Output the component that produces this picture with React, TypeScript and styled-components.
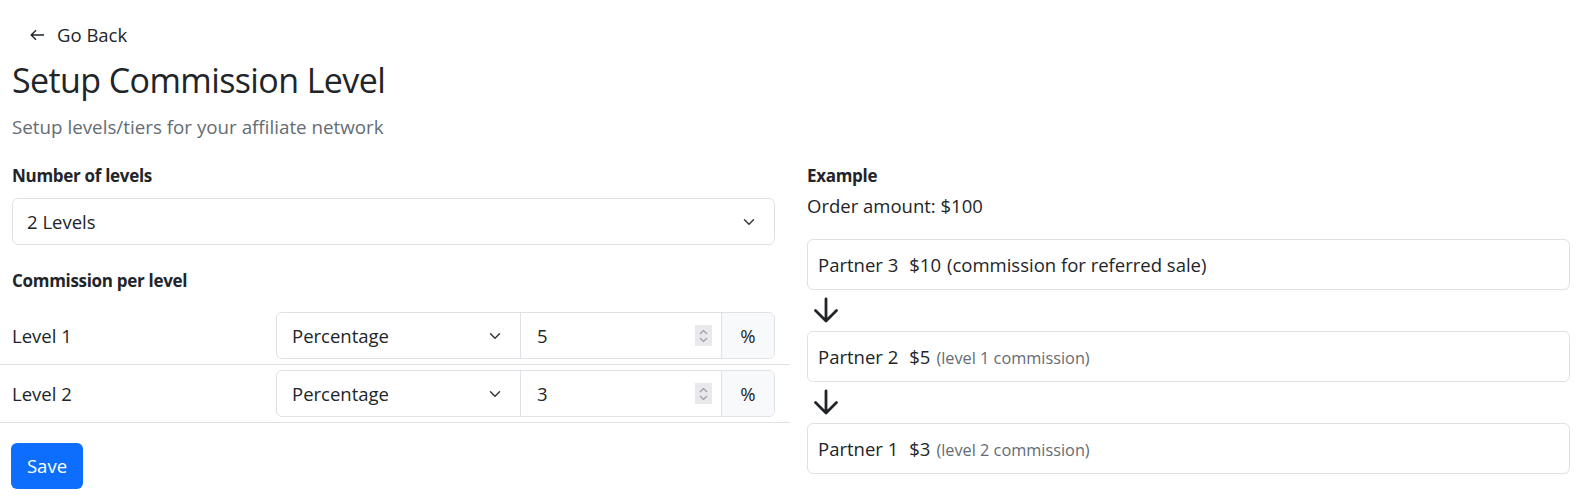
import React from "react";
import styled, { createGlobalStyle } from "styled-components";

const GlobalStyle = createGlobalStyle`
  html, body {
    margin: 0;
    padding: 0;
    background: #ffffff;
  }
  body {
    font-family: "Open Sans", "Noto Sans", "Liberation Sans", sans-serif;
    font-size: 18.5px;
    line-height: 24px;
    color: #212529;
  }
  * { box-sizing: border-box; }
`;

const Page = styled.div`
  padding-top: 16px;
`;

const Header = styled.div`
  padding: 0 15px 0 12px;
`;

const BackButton = styled.button`
  display: inline-flex;
  align-items: center;
  gap: 12px;
  height: 38px;
  padding: 0 12px 0 18px;
  border: none;
  background: transparent;
  font: inherit;
  color: #212529;
  cursor: pointer;
`;

const Title = styled.h2`
  margin: 7px 0 0;
  font-size: 34px;
  line-height: 38px;
  letter-spacing: -0.6px;
  font-weight: 400;
`;

const Subtitle = styled.p`
  margin: 16px 0 0;
  font-size: 18.8px;
  color: #646c74;
`;

const Columns = styled.div`
  display: grid;
  grid-template-columns: 790px 1fr;
  margin-top: 25px;
`;

const LeftCol = styled.div`
  display: flex;
  flex-direction: column;
`;

const LeftInner = styled.div`
  padding: 0 15px 0 12px;
`;

const RightCol = styled.div`
  padding: 0 10px 0 17px;
`;

const Label = styled.div<{ $top?: number }>`
  font-size: 17px;
  font-weight: 700;
  letter-spacing: -0.3px;
  margin-top: ${(p) => p.$top ?? 0}px;
`;

const SelectBox = styled.div`
  display: flex;
  align-items: center;
  justify-content: space-between;
  height: 47px;
  margin-top: 10px;
  padding: 0 17px 0 14px;
  border: 1px solid #dee2e6;
  border-radius: 6px;
  background: #fff;
`;

const Table = styled.div`
  margin-top: 14px;
`;

const Row = styled.div`
  display: grid;
  grid-template-columns: 264px 1fr;
  align-items: center;
  padding: 5px 15px 5px 12px;
  border-bottom: 1px solid #dee2e6;
`;

const InputGroup = styled.div`
  display: grid;
  grid-template-columns: 244px 1fr 53px;
  height: 47px;
  border: 1px solid #dee2e6;
  border-radius: 6px;
  overflow: hidden;
`;

const GroupSelect = styled.div`
  display: flex;
  align-items: center;
  justify-content: space-between;
  padding: 0 17px 0 15px;
  border-right: 1px solid #dee2e6;
`;

const NumberField = styled.div`
  display: flex;
  align-items: center;
  justify-content: space-between;
  padding: 0 9px 0 16px;
`;

const Spinner = styled.span`
  display: flex;
  flex-direction: column;
  align-items: center;
  justify-content: center;
  width: 17px;
  height: 21px;
  background: #e9e9ed;
  gap: 2px;
`;

const Addon = styled.div`
  display: flex;
  align-items: center;
  justify-content: center;
  background: #f8f9fa;
  border-left: 1px solid #dee2e6;
`;

const SaveButton = styled.button`
  align-self: flex-start;
  margin: 20px 0 0 11px;
  width: 72px;
  height: 46px;
  border: none;
  border-radius: 6px;
  background: #0d6efd;
  color: #fff;
  font: inherit;
  cursor: pointer;
`;

const OrderLine = styled.div`
  margin-top: 6px;
`;

const Flow = styled.div`
  display: flex;
  flex-direction: column;
  margin-top: 21px;
`;

const Card = styled.div`
  display: flex;
  align-items: baseline;
  height: 51px;
  padding: 13px 10px;
  border: 1px solid #dee2e6;
  border-radius: 6px;
  white-space: pre;
`;

const Amount = styled.span`
  margin-left: 11px;
`;

const Note = styled.span<{ $muted?: boolean }>`
  margin-left: 6px;
  font-size: ${(p) => (p.$muted ? "16.3px" : "inherit")};
  color: ${(p) => (p.$muted ? "#646c74" : "#212529")};
`;

const ArrowSlot = styled.div`
  height: 41px;
  display: flex;
  align-items: center;
  padding-left: 6px;
`;

const Chevron = () => (
  <svg width="16" height="12" viewBox="0 0 16 16" fill="none">
    <path d="M2 5l6 6 6-6" stroke="#343a40" strokeWidth="2" strokeLinecap="round" strokeLinejoin="round" />
  </svg>
);

const LeftArrow = () => (
  <svg width="15" height="12" viewBox="0 0 15 12" fill="none">
    <path d="M14 6H1.5M6 1.2L1.2 6 6 10.8" stroke="#212529" strokeWidth="1.4" />
  </svg>
);

const DownArrow = () => (
  <svg width="26" height="27" viewBox="0 0 26 27" fill="none">
    <path d="M13 2v22M2.5 13.5L13 24 23.5 13.5" stroke="#212529" strokeWidth="2.8" strokeLinecap="round" strokeLinejoin="round" />
  </svg>
);

const SpinUp = () => (
  <svg width="9" height="6" viewBox="0 0 9 6" fill="none">
    <path d="M1 5l3.5-3.5L8 5" stroke="#9a9aa2" strokeWidth="1.2" />
  </svg>
);
const SpinDown = () => (
  <svg width="9" height="6" viewBox="0 0 9 6" fill="none">
    <path d="M1 1l3.5 3.5L8 1" stroke="#9a9aa2" strokeWidth="1.2" />
  </svg>
);

const levels = [
  { name: "Level 1", value: "5" },
  { name: "Level 2", value: "3" },
];

const partners = [
  { name: "Partner 3", amount: "$10", note: "(commission for referred sale)", muted: false },
  { name: "Partner 2", amount: "$5", note: "(level 1 commission)", muted: true },
  { name: "Partner 1", amount: "$3", note: "(level 2 commission)", muted: true },
];

export default function App() {
  return (
    <Page>
      <GlobalStyle />
      <Header>
        <BackButton>
          <LeftArrow />
          Go Back
        </BackButton>
        <Title>Setup Commission Level</Title>
        <Subtitle>Setup levels/tiers for your affiliate network</Subtitle>
      </Header>
      <Columns>
        <LeftCol>
          <LeftInner>
            <Label>Number of levels</Label>
            <SelectBox>
              <span>2 Levels</span>
              <Chevron />
            </SelectBox>
            <Label $top={24}>Commission per level</Label>
          </LeftInner>
          <Table>
            {levels.map((l) => (
              <Row key={l.name}>
                <span>{l.name}</span>
                <InputGroup>
                  <GroupSelect>
                    <span>Percentage</span>
                    <Chevron />
                  </GroupSelect>
                  <NumberField>
                    <span>{l.value}</span>
                    <Spinner>
                      <SpinUp />
                      <SpinDown />
                    </Spinner>
                  </NumberField>
                  <Addon>%</Addon>
                </InputGroup>
              </Row>
            ))}
          </Table>
          <SaveButton>Save</SaveButton>
        </LeftCol>
        <RightCol>
          <Label>Example</Label>
          <OrderLine>Order amount: $100</OrderLine>
          <Flow>
            {partners.map((p, i) => (
              <React.Fragment key={p.name}>
                {i > 0 && (
                  <ArrowSlot>
                    <DownArrow />
                  </ArrowSlot>
                )}
                <Card>
                  <span>{p.name}</span>
                  <Amount>{p.amount}</Amount>
                  <Note $muted={p.muted}>{p.note}</Note>
                </Card>
              </React.Fragment>
            ))}
          </Flow>
        </RightCol>
      </Columns>
    </Page>
  );
}
